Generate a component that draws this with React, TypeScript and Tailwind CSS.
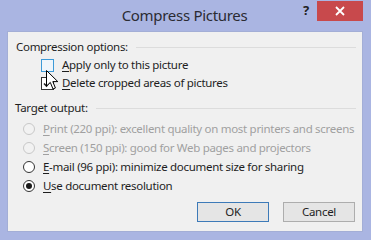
import React from "react";

const font = { fontFamily: '"Noto Sans", "Open Sans", "Liberation Sans", sans-serif' };

function U({ c }: { c: string }) {
  return <span className="underline underline-offset-2 decoration-1">{c}</span>;
}

function Radio({ state }: { state: "disabled" | "off" | "on" }) {
  if (state === "disabled")
    return <div className="shrink-0 w-[12px] h-[12px] rounded-full border border-[#c8c8c8] bg-[#f2f2f2]" />;
  return (
    <div className="shrink-0 w-[12px] h-[12px] rounded-full border border-[#333] bg-white flex items-center justify-center">
      {state === "on" && <div className="w-[6px] h-[6px] rounded-full bg-[#1a1a1a]" />}
    </div>
  );
}

function RadioRow({ state, k, rest }: { state: "disabled" | "off" | "on"; k: string; rest: string }) {
  return (
    <div className="h-[19px] flex items-center pl-[15px]">
      <Radio state={state} />
      <span className={"ml-[8px] whitespace-nowrap " + (state === "disabled" ? "text-[#a0a0a0]" : "text-[#1e1e1e]")}>
        <U c={k} />
        {rest}
      </span>
    </div>
  );
}

export default function App() {
  return (
    <div className="w-[371px] h-[240px] bg-[#aab5e2] flex flex-col relative text-[11.5px] tracking-[-0.3px]" style={font}>
      <div className="h-[31px] flex items-start relative">
        <div className="flex-1" />
        <div className="pt-[5px] ml-[6px] text-[15px] tracking-[-0.3px] text-[#2b2b33] leading-[20px]">Compress Pictures</div>
        <div className="flex-1 flex justify-end items-start pr-[8px]">
          <div className="font-bold text-[13px] text-[#222] mt-[2px] mr-[8px] leading-[16px]">?</div>
          <div className="w-[46px] h-[20px] mt-[1px] bg-[#c8494c] flex items-center justify-center">
            <svg width="10" height="10" viewBox="0 0 10 10">
              <path d="M1 1 L9 9 M9 1 L1 9" stroke="white" strokeWidth="1.8" />
            </svg>
          </div>
        </div>
      </div>
      <div className="flex-1 ml-[7px] mr-[8px] mb-[8px] bg-[#f0f0f0] border border-[#a3aed6] flex flex-col pt-[6px] pb-[8px] text-[#1e1e1e]">
        <div className="h-[18px] flex items-center pl-[8px] pr-[6px]">
          <span className="whitespace-nowrap">Compression options:</span>
          <div className="flex-1 h-px bg-[#dcdcdc] ml-[8px]" />
        </div>
        <div className="h-[18px] flex items-center pl-[33px]">
          <div className="shrink-0 w-[13px] h-[13px] border border-[#3c9ad8] bg-[#eef5fb]" />
          <span className="ml-[8px] whitespace-nowrap">
            <U c="A" />
            pply only to this picture
          </span>
        </div>
        <div className="h-[18px] flex items-center pl-[33px]">
          <div className="shrink-0 w-[13px] h-[13px] border border-[#333] bg-white flex items-center justify-center">
            <svg width="9" height="9" viewBox="0 0 9 9">
              <path d="M1 4.5 L3.5 7 L8 1.5" stroke="#222" strokeWidth="1.6" fill="none" />
            </svg>
          </div>
          <span className="ml-[8px] whitespace-nowrap">
            <U c="D" />
            elete cropped areas of pictures
          </span>
        </div>
        <div className="h-[18px] flex items-center pl-[7px] pr-[6px] mt-[7px]">
          <span className="whitespace-nowrap">Target output:</span>
          <div className="flex-1 h-px bg-[#dcdcdc] ml-[8px]" />
        </div>
        <div className="mt-[2px]">
          <RadioRow state="disabled" k="P" rest="rint (220 ppi): excellent quality on most printers and screens" />
          <RadioRow state="disabled" k="S" rest="creen (150 ppi): good for Web pages and projectors" />
          <RadioRow state="off" k="E" rest="-mail (96 ppi): minimize document size for sharing" />
          <RadioRow state="on" k="U" rest="se document resolution" />
        </div>
        <div className="flex justify-end gap-[14px] pr-[7px] mt-[7px]">
          <div className="w-[72px] h-[20px] border border-[#3d7ab8] bg-[#e5e5e5] flex items-center justify-center">OK</div>
          <div className="w-[72px] h-[20px] border border-[#adadad] bg-[#e5e5e5] flex items-center justify-center">Cancel</div>
        </div>
      </div>
      <svg className="absolute left-[46px] top-[70px]" width="13" height="21" viewBox="0 0 13 21">
        <path d="M0.5 0.5 L0.5 16 L4.3 12.4 L7 19 L9.4 18 L6.8 11.6 L11.8 11.6 Z" fill="white" stroke="black" strokeWidth="1" strokeLinejoin="miter" />
      </svg>
    </div>
  );
}
